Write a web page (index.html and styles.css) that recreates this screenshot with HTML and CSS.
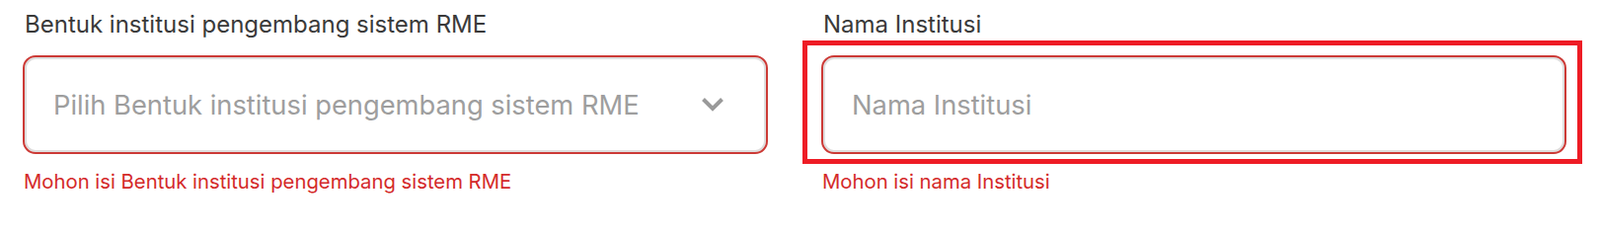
FILE: index.html
```html
<!DOCTYPE html>
<html lang="id">
<head>
<meta charset="utf-8">
<title>Form</title>
<link rel="stylesheet" href="styles.css">
</head>
<body>
<div class="form-row">
  <div class="field">
    <label class="label">Bentuk institusi pengembang sistem RME</label>
    <div class="control-wrap">
      <div class="control select">
        <span class="placeholder">Pilih Bentuk institusi pengembang sistem RME</span>
        <svg class="chevron" width="22" height="14" viewBox="0 0 22 14" aria-hidden="true">
          <path d="M1.5 1.5 L11 11 L20.5 1.5" fill="none" stroke="#9a9a9a" stroke-width="4" stroke-linecap="butt" stroke-linejoin="miter"/>
        </svg>
      </div>
    </div>
    <div class="error">Mohon isi Bentuk institusi pengembang sistem RME</div>
  </div>
  <div class="field">
    <label class="label">Nama Institusi</label>
    <div class="control-wrap focus-ring">
      <div class="control">
        <span class="placeholder">Nama Institusi</span>
      </div>
    </div>
    <div class="error">Mohon isi nama Institusi</div>
  </div>
</div>
</body>
</html>
```

FILE: styles.css
```css
html, body {
  margin: 0;
  padding: 0;
  background: #ffffff;
}
body {
  font-family: Inter, "Noto Sans", "Liberation Sans", sans-serif;
}
.form-row {
  display: grid;
  grid-template-columns: 755px 755px;
  column-gap: 54px;
  padding: 10px 0 0 23px;
}
.field {
  display: flex;
  flex-direction: column;
}
.label {
  font-size: 24px;
  line-height: 30px;
  color: #3a3a3a;
  padding-left: 2px;
  height: 46px;
}
.control-wrap {
  position: relative;
}
.focus-ring::after {
  content: "";
  position: absolute;
  left: -19px;
  right: -16px;
  top: -15px;
  bottom: -10px;
  border: 5px solid #ee1c25;
  pointer-events: none;
}
.control {
  box-sizing: border-box;
  height: 100px;
  border: 2px solid #cc3a36;
  border-radius: 13px;
  box-shadow: inset 0 0 0 2px #dedede;
  display: flex;
  align-items: center;
  justify-content: space-between;
  padding: 0 43px 0 29px;
}
.placeholder {
  font-size: 27.3px;
  color: #9e9e9e;
}
.chevron {
  display: block;
}
.error {
  margin-top: 15px;
  font-size: 20.3px;
  line-height: 26px;
  color: #d42a2a;
  padding-left: 1px;
}
```
